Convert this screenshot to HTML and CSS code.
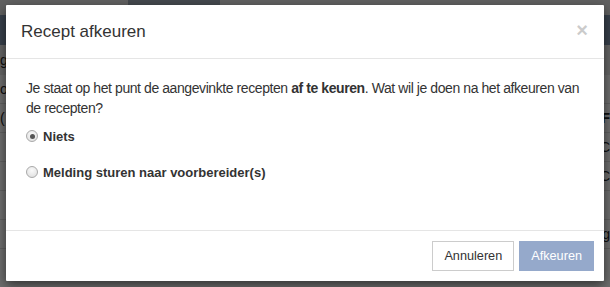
FILE: index.html
```html
<!DOCTYPE html>
<html lang="nl">
<head>
  <meta charset="UTF-8" />
  <title>Recept afkeuren</title>
  <link rel="stylesheet" href="styles.css">
</head>
<body>
  <!-- pagina achter de modal -->
  <div class="page">
    <div class="topbar"><div class="tab"></div></div>
    <div class="navbar"></div>
    <div class="subbar"><span>ge</span></div>
    <div class="rows">
      <div class="row"><span class="left">oc</span></div>
      <div class="row"><span class="left">(</span><span class="right bold">F</span></div>
      <div class="row"><span class="right">2C</span></div>
      <div class="row"><span class="right">2C</span></div>
      <div class="row"></div>
      <div class="row"><span class="right">g</span></div>
    </div>
  </div>

  <div class="backdrop"></div>

  <div class="modal">
    <div class="modal-header">
      <h4 class="modal-title">Recept afkeuren</h4>
      <button class="close" type="button">&times;</button>
    </div>
    <div class="modal-body">
      <p>Je staat op het punt de aangevinkte recepten <b>af te keuren</b>. Wat wil je doen na het afkeuren van de recepten?</p>
      <label class="radio"><input type="radio" name="actie" checked> Niets</label>
      <label class="radio"><input type="radio" name="actie"> Melding sturen naar voorbereider(s)</label>
    </div>
    <div class="modal-footer">
      <button class="btn btn-default" type="button">Annuleren</button>
      <button class="btn btn-primary" type="button" disabled>Afkeuren</button>
    </div>
  </div>
</body>
</html>
```

FILE: styles.css
```css
body {
  margin: 0;
  width: 610px;
  height: 287px;
  overflow: hidden;
  position: relative;
  font-family: "Liberation Sans", Arial, sans-serif;
  font-size: 14px;
  color: #333;
  background: #fff;
}

/* achtergrondpagina */
.page {
  height: 287px;
  background: #f4f4f4;
  color: #222;
}

.topbar {
  height: 15px;
  background: #d8d8d8;
}

.topbar .tab {
  margin-left: 128px;
  width: 92px;
  height: 15px;
  background: #9aa3ae;
}

.navbar {
  height: 30px;
  background: #7d8fa6;
}

.subbar {
  height: 30px;
  background: #e0e0e0;
  font-size: 14px;
  line-height: 30px;
}

.rows .row {
  height: 28px;
  border-bottom: 1px solid #d6d6d6;
  display: flex;
  justify-content: space-between;
  align-items: center;
  font-size: 14px;
}

.rows .row .right {
  margin-left: auto;
}

.bold {
  font-weight: bold;
}

.backdrop {
  position: absolute;
  top: 0; left: 0;
  width: 100%; height: 100%;
  background: #000;
  opacity: 0.55;
}

/* modal */
.modal {
  position: absolute;
  top: 5px;
  left: 6px;
  width: 598px;
  height: 276px;
  box-sizing: border-box;
  background: #fff;
  border-radius: 1px;
  box-shadow: 0 4px 12px rgba(0, 0, 0, 0.55);
  display: flex;
  flex-direction: column;
}

.modal-header {
  display: flex;
  justify-content: space-between;
  align-items: center;
  padding: 0 15px;
  height: 53px;
  border-bottom: 1px solid #e5e5e5;
}

.modal-title {
  margin: 0;
  font-size: 17px;
  font-weight: normal;
  color: #333;
}

.close {
  background: transparent;
  border: none;
  padding: 0 0 4px;
  font-family: "Liberation Sans", Arial, sans-serif;
  font-size: 20px;
  font-weight: bold;
  line-height: 1;
  color: #000;
  opacity: 0.2;
  margin-right: 1px;
}

.modal-body {
  flex: 1;
  padding: 19px 20px 0;
}

.modal-body p {
  margin: 0 0 8px;
  line-height: 20px;
  font-size: 14px;
  letter-spacing: -0.42px;
}

.radio {
  display: flex;
  align-items: center;
  font-weight: bold;
  font-size: 13px;
  height: 20px;
  margin-bottom: 16px;
}

.radio input {
  appearance: none;
  -webkit-appearance: none;
  margin: 0 5px 0 0;
  width: 12px;
  height: 12px;
  border-radius: 50%;
  border: 1px solid #a9a9a9;
  background: radial-gradient(circle at 50% 35%, #fafafa 0%, #dcdcdc 100%);
  box-sizing: border-box;
  position: relative;
}

.radio input:checked::after {
  content: "";
  position: absolute;
  top: 2.5px;
  left: 2.5px;
  width: 5px;
  height: 5px;
  border-radius: 50%;
  background: #555;
}

.modal-footer {
  display: flex;
  justify-content: flex-end;
  gap: 5px;
  padding: 10px;
  border-top: 1px solid #e5e5e5;
}

.btn {
  height: 30px;
  padding: 0 11px;
  font-family: "Liberation Sans", Arial, sans-serif;
  font-size: 12.7px;
  border-radius: 0;
  border: 1px solid transparent;
}

.btn-default {
  background: #fff;
  border-color: #ccc;
  color: #333;
}

.btn-primary {
  background: #95a9cb;
  border-color: #95a9cb;
  color: #fff;
}
```
